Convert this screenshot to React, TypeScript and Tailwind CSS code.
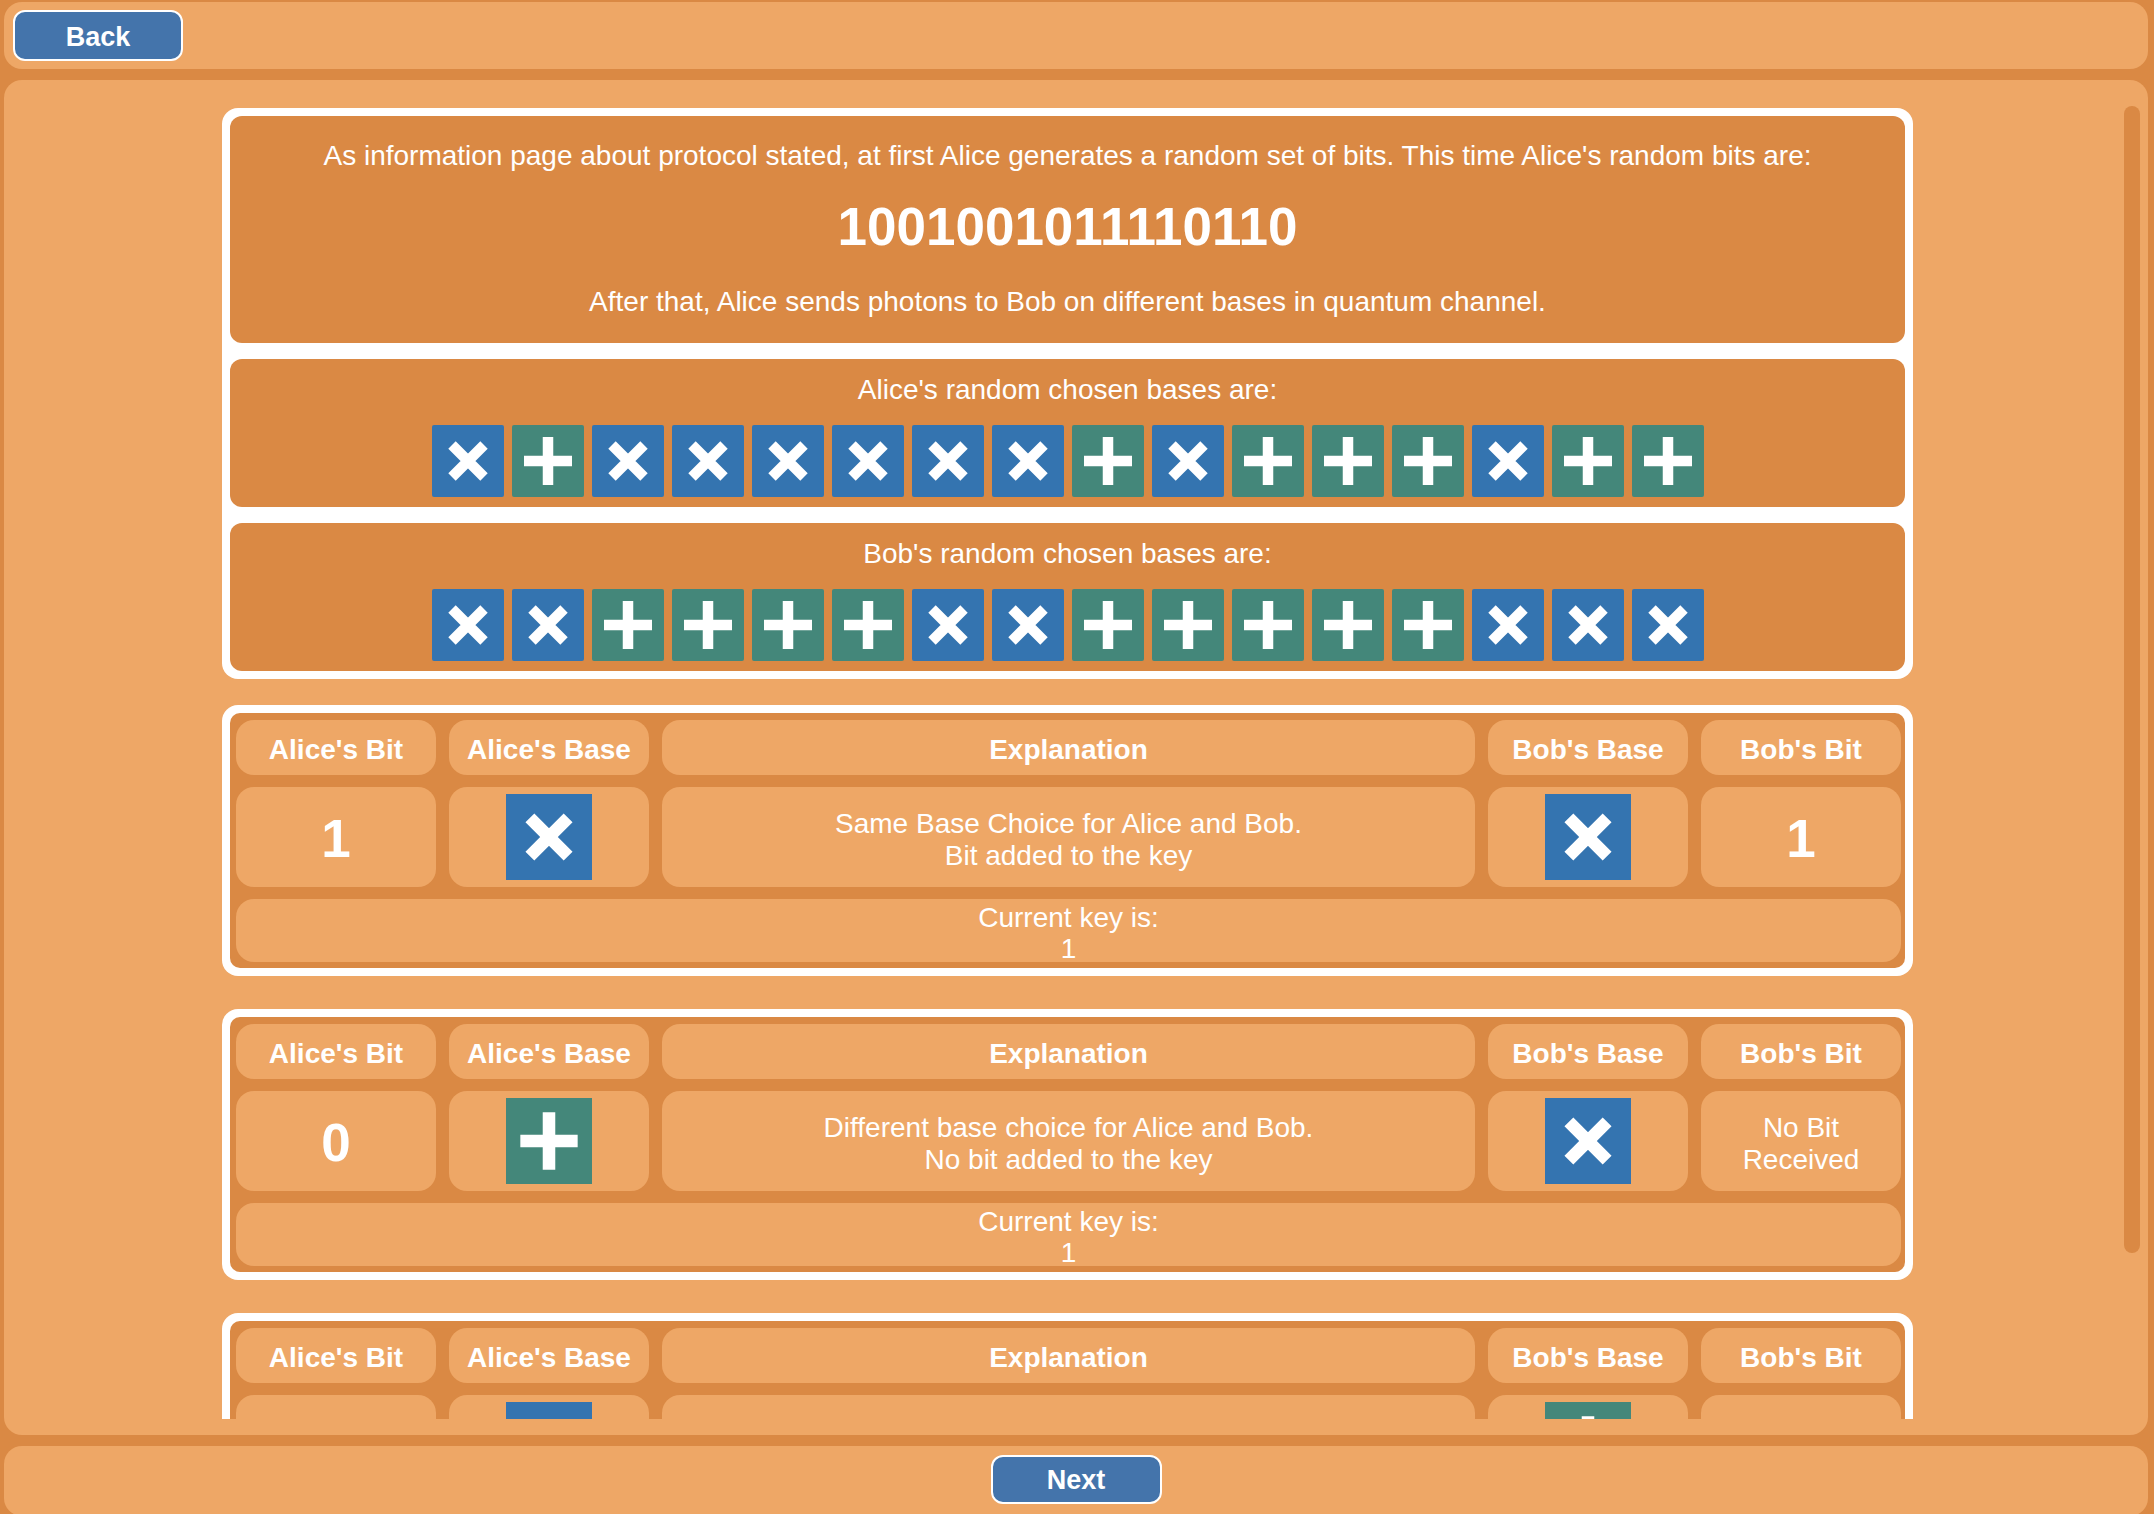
type Base = 'x' | '+';

const BITS = '1001001011110110';
const ALICE_BASES: Base[] = ['x', '+', 'x', 'x', 'x', 'x', 'x', 'x', '+', 'x', '+', '+', '+', 'x', '+', '+'];
const BOB_BASES: Base[] = ['x', 'x', '+', '+', '+', '+', 'x', 'x', '+', '+', '+', '+', '+', 'x', 'x', 'x'];

function BaseTile({ base, size, radius = 2 }: { base: Base; size: number; radius?: number }) {
  const fill = base === 'x' ? '#3474b0' : '#44877a';
  return (
    <svg width={size} height={size} viewBox="0 0 72 72" className="block shrink-0">
      <rect width="72" height="72" rx={radius} fill={fill} />
      {base === 'x' ? (
        <path d="M20 20L52 52M52 20L20 52" stroke="white" strokeWidth="10.5" />
      ) : (
        <path d="M12 36H60M36 12V60" stroke="white" strokeWidth="10.5" />
      )}
    </svg>
  );
}

function Cell({ children, className = '' }: { children: React.ReactNode; className?: string }) {
  return (
    <div className={`flex items-center justify-center rounded-[18px] bg-[#eea766] text-center text-white ${className}`}>
      {children}
    </div>
  );
}

interface Step {
  bit: string;
  alice: Base;
  bob: Base;
  same: boolean;
  key: string;
}

function buildSteps(): Step[] {
  let key = '';
  return BITS.split('').map((bit, i) => {
    const same = ALICE_BASES[i] === BOB_BASES[i];
    if (same) key += bit;
    return { bit, alice: ALICE_BASES[i], bob: BOB_BASES[i], same, key };
  });
}

function StepCard({ step }: { step: Step }) {
  return (
    <div className="mt-[33px] rounded-[16px] bg-white p-[8px]">
      <div className="rounded-[10px] bg-[#da8944] pt-[7px] pb-[6px] pl-[6px] pr-[4px]">
        <div className="grid grid-cols-[200px_200px_1fr_200px_200px] gap-x-[13px] gap-y-[12px]">
          {["Alice's Bit", "Alice's Base", 'Explanation', "Bob's Base", "Bob's Bit"].map((h) => (
            <Cell key={h} className="h-[55px] pt-[5px] text-[28px] font-bold">
              {h}
            </Cell>
          ))}

          <Cell className="h-[100px] pt-[3px] text-[53px] font-bold leading-none">{step.bit}</Cell>
          <Cell className="h-[100px]">
            <BaseTile base={step.alice} size={86} radius={0} />
          </Cell>
          <Cell className="h-[100px] pt-[5px] text-[28px] leading-[32px]">
            {step.same ? (
              <div>
                Same Base Choice for Alice and Bob.
                <br />
                Bit added to the key
              </div>
            ) : (
              <div>
                Different base choice for Alice and Bob.
                <br />
                No bit added to the key
              </div>
            )}
          </Cell>
          <Cell className="h-[100px]">
            <BaseTile base={step.bob} size={86} radius={0} />
          </Cell>
          {step.same ? (
            <Cell className="h-[100px] pt-[3px] text-[53px] font-bold leading-none">{step.bit}</Cell>
          ) : (
            <Cell className="h-[100px] px-[40px] pt-[5px] text-[28px] leading-[32px]">No Bit Received</Cell>
          )}

          <Cell className="col-span-5 h-[63px] pt-[4px] text-[28px] leading-[31px]">
            <div>
              Current key is:
              <br />
              {step.key}
            </div>
          </Cell>
        </div>
      </div>
    </div>
  );
}

export default function App() {
  // only the first steps fit in the scroll area
  const steps = buildSteps().slice(0, 3);

  return (
    <div className="flex h-screen flex-col gap-[11px] overflow-hidden bg-[#da8944] pt-[2px] pl-[4px] pr-[6px] font-['Liberation_Sans',Arial,sans-serif] text-white">
      {/* top bar */}
      <div className="flex h-[67px] shrink-0 items-center rounded-[18px] bg-[#eea766] pl-[9px]">
        <button className="h-[51px] w-[170px] rounded-[12px] border-2 border-white bg-[#4474ab] pt-[3px] text-[27px] font-bold text-white">
          Back
        </button>
      </div>

      {/* main panel */}
      <div className="relative flex h-[1355px] shrink-0 flex-col rounded-[18px] bg-[#eea766] pt-[16px] pb-[16px]">
        <div className="w-[2127px] flex-1 overflow-hidden">
          <div className="mx-auto w-[1691px] pt-[12px]">
            {/* intro card */}
            <div className="flex flex-col gap-[16px] rounded-[16px] bg-white p-[8px]">
              <div className="rounded-[12px] bg-[#da8944] pt-[24px] pb-[25px] text-center">
                <p className="text-[28px] leading-[32px]">
                  As information page about protocol stated, at first Alice generates a random set of bits. This time Alice's random bits are:
                </p>
                <p className="mt-[25px] text-[53px] font-bold leading-[60px]">{BITS}</p>
                <p className="mt-[29px] text-[28px] leading-[32px]">
                  After that, Alice sends photons to Bob on different bases in quantum channel.
                </p>
              </div>

              <div className="rounded-[12px] bg-[#da8944] pt-[15px] pb-[10px] text-center">
                <p className="text-[28px] leading-[32px]">Alice's random chosen bases are:</p>
                <div className="mt-[19px] flex justify-center gap-[8px]">
                  {ALICE_BASES.map((b, i) => (
                    <BaseTile key={i} base={b} size={72} />
                  ))}
                </div>
              </div>

              <div className="rounded-[12px] bg-[#da8944] pt-[15px] pb-[10px] text-center">
                <p className="text-[28px] leading-[32px]">Bob's random chosen bases are:</p>
                <div className="mt-[19px] flex justify-center gap-[8px]">
                  {BOB_BASES.map((b, i) => (
                    <BaseTile key={i} base={b} size={72} />
                  ))}
                </div>
              </div>
            </div>

            <div className="-mt-[7px]">
              {steps.map((s, i) => (
                <StepCard key={i} step={s} />
              ))}
            </div>
          </div>
        </div>

        {/* scrollbar thumb */}
        <div className="absolute right-[8px] top-[26px] h-[1147px] w-[16px] rounded-full bg-[#da8944]" />
      </div>

      {/* bottom bar */}
      <div className="flex h-[70px] shrink-0 justify-center rounded-[18px] bg-[#eea766] pt-[9px]">
        <button className="h-[49px] w-[171px] rounded-[12px] border-2 border-white bg-[#4474ab] pt-[2px] text-[27px] font-bold text-white">
          Next
        </button>
      </div>
    </div>
  );
}
